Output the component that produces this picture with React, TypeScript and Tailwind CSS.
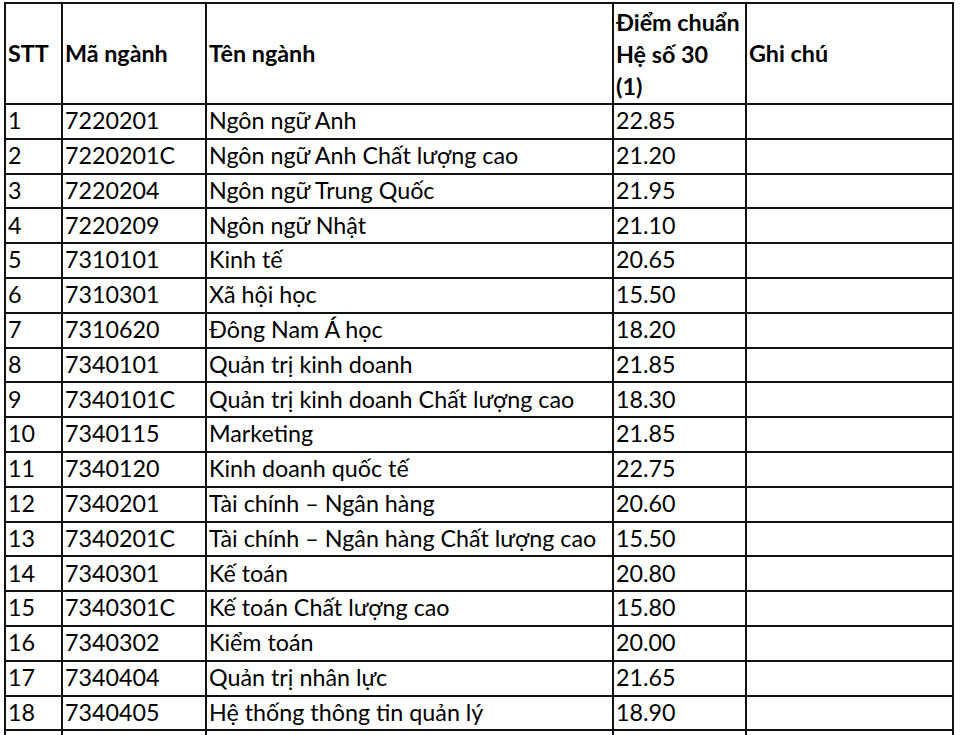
import React from 'react'

const rows = [
  ['1', '7220201', 'Ngôn ngữ Anh', '22.85'],
  ['2', '7220201C', 'Ngôn ngữ Anh Chất lượng cao', '21.20'],
  ['3', '7220204', 'Ngôn ngữ Trung Quốc', '21.95'],
  ['4', '7220209', 'Ngôn ngữ Nhật', '21.10'],
  ['5', '7310101', 'Kinh tế', '20.65'],
  ['6', '7310301', 'Xã hội học', '15.50'],
  ['7', '7310620', 'Đông Nam Á học', '18.20'],
  ['8', '7340101', 'Quản trị kinh doanh', '21.85'],
  ['9', '7340101C', 'Quản trị kinh doanh Chất lượng cao', '18.30'],
  ['10', '7340115', 'Marketing', '21.85'],
  ['11', '7340120', 'Kinh doanh quốc tế', '22.75'],
  ['12', '7340201', 'Tài chính – Ngân hàng', '20.60'],
  ['13', '7340201C', 'Tài chính – Ngân hàng Chất lượng cao', '15.50'],
  ['14', '7340301', 'Kế toán', '20.80'],
  ['15', '7340301C', 'Kế toán Chất lượng cao', '15.80'],
  ['16', '7340302', 'Kiểm toán', '20.00'],
  ['17', '7340404', 'Quản trị nhân lực', '21.65'],
  ['18', '7340405', 'Hệ thống thông tin quản lý', '18.90'],
]

const cell = 'border-2 border-[#111] px-[2px] text-left align-middle'

export default function App() {
  return (
    <div className="w-[960px] h-[735px] overflow-hidden bg-white font-['Lato','Liberation_Sans',sans-serif] text-[23.3px] text-black">
      <table className="ml-[4px] mt-[2px] border-collapse table-fixed">
        <colgroup>
          <col className="w-[57px]" />
          <col className="w-[144px]" />
          <col className="w-[407px]" />
          <col className="w-[133px]" />
          <col className="w-[207px]" />
        </colgroup>
        <thead>
          <tr className="h-[101px] font-bold">
            <th className={`${cell} pb-[1px]`}>STT</th>
            <th className={`${cell} pb-[1px]`}>Mã ngành</th>
            <th className={`${cell} pb-[1px]`}>Tên ngành</th>
            <th className={`${cell} leading-[32px]`}>
              Điểm chuẩn
              <br />
              Hệ số 30
              <br />
              (1)
            </th>
            <th className={`${cell} pb-[1px]`}>Ghi chú</th>
          </tr>
        </thead>
        <tbody>
          {rows.map((r, i) => (
            <tr key={i} className="h-[34.8px] leading-none">
              <td className={`${cell} pb-[1px]`}>{r[0]}</td>
              <td className={`${cell} pb-[1px]`}>{r[1]}</td>
              <td className={`${cell} pb-[1px]`}>{r[2]}</td>
              <td className={`${cell} pb-[1px]`}>{r[3]}</td>
              <td className={cell}></td>
            </tr>
          ))}
          <tr className="h-[34.8px]">
            <td className={cell}></td>
            <td className={cell}></td>
            <td className={cell}></td>
            <td className={cell}></td>
            <td className={cell}></td>
          </tr>
        </tbody>
      </table>
    </div>
  )
}
